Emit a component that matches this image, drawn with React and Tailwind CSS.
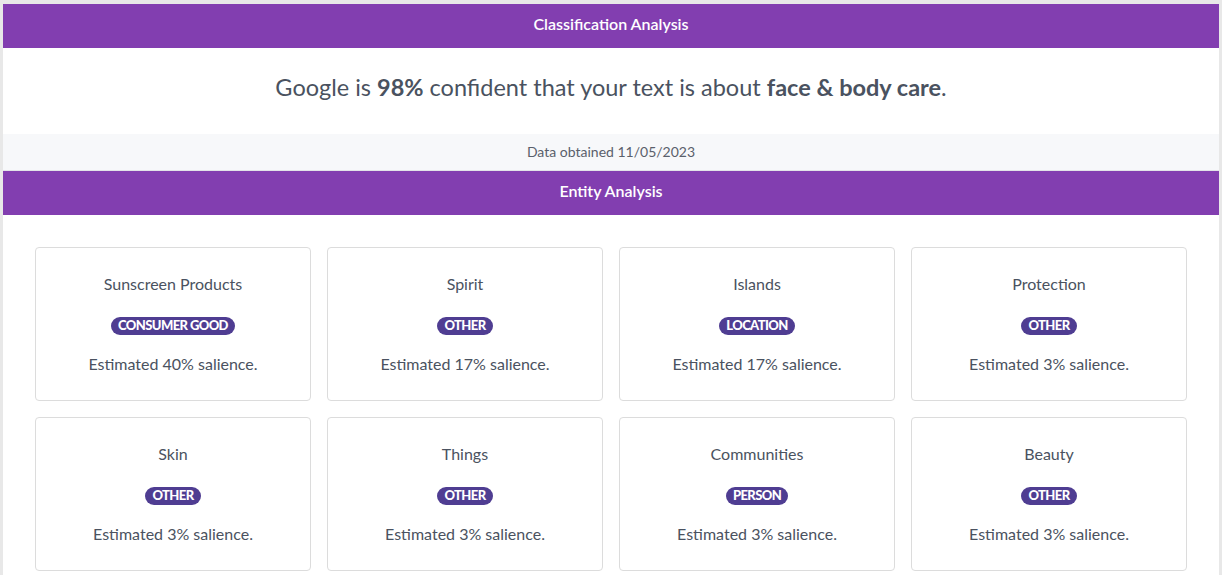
import React from "react";

const entities = [
  { name: "Sunscreen Products", type: "CONSUMER GOOD", salience: 40 },
  { name: "Spirit", type: "OTHER", salience: 17 },
  { name: "Islands", type: "LOCATION", salience: 17 },
  { name: "Protection", type: "OTHER", salience: 3 },
  { name: "Skin", type: "OTHER", salience: 3 },
  { name: "Things", type: "OTHER", salience: 3 },
  { name: "Communities", type: "PERSON", salience: 3 },
  { name: "Beauty", type: "OTHER", salience: 3 },
];

const SectionHeader = ({ children }) => (
  <div className="h-[44px] flex items-center justify-center pb-[5px] bg-[#823eb0] text-white text-[16px] font-semibold">
    {children}
  </div>
);

const EntityCard = ({ name, type, salience }) => (
  <div className="h-[154px] flex flex-col items-center border border-[#dcdcdc] rounded-[4px] bg-white pt-[25px]">
    <div className="text-[16px] text-[#4a5260] leading-[22px]">{name}</div>
    <span className="mt-[22px] px-[7px] h-[18px] flex items-center rounded-full bg-[#4f3d92] text-white text-[13px] font-black tracking-[-0.6px]">
      {type}
    </span>
    <div className="mt-[18px] text-[16px] text-[#4a5260] leading-[22px]">
      Estimated {salience}% salience.
    </div>
  </div>
);

export default function App() {
  return (
    <div
      className="min-h-[575px] bg-[#e8e8e8] pt-[4px] px-[3px]"
      style={{ fontFamily: "Lato, 'Noto Sans', sans-serif" }}
    >
      <div className="bg-white min-h-[571px]">
        <SectionHeader>Classification Analysis</SectionHeader>
        <div className="h-[86px] flex items-center justify-center pb-[6px] text-[23.5px] text-[#4a5260]">
          <p>
            Google is <span className="font-bold">98%</span> confident that your text is about{" "}
            <span className="font-bold">face &amp; body care</span>.
          </p>
        </div>
        <div className="h-[37px] flex items-center justify-center pb-[2px] bg-[#f7f8fa] border-b border-[#e2e4e8] text-[14px] text-[#5a606b]">
          Data obtained 11/05/2023
        </div>
        <SectionHeader>Entity Analysis</SectionHeader>
        <div className="grid grid-cols-4 gap-4 px-8 pt-8 pb-8">
          {entities.map((e) => (
            <EntityCard key={e.name} {...e} />
          ))}
        </div>
      </div>
    </div>
  );
}
